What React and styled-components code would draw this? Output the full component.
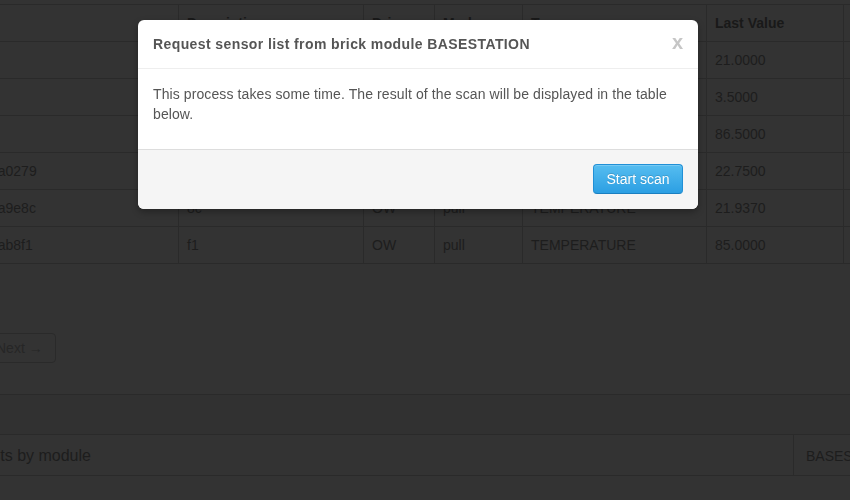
import styled, { createGlobalStyle } from 'styled-components';

// the page behind the modal is shown dimmed, so its colours are the darkened ones
const dim = {
  bg: '#333333',
  line: '#2a2a2a',
  text: '#1d1d1d',
  head: '#191919',
  muted: '#262626',
  band: '#313131',
};

const GlobalStyle = createGlobalStyle`
  html, body {
    margin: 0;
    padding: 0;
  }
  body {
    font-family: "Liberation Sans", Arial, Helvetica, sans-serif;
    font-size: 14px;
    line-height: 20px;
    color: ${dim.text};
    background: ${dim.bg};
    overflow: hidden;
  }
`;

const Page = styled.div`
  width: 850px;
  height: 500px;
  overflow: hidden;
  background: ${dim.bg};
`;

// page is scrolled sideways, so the left edge of the content sits off screen
const Content = styled.div`
  width: 1150px;
  margin-left: -86px;
  padding-top: 4px;
`;

const Table = styled.table`
  border-collapse: separate;
  border-spacing: 0;
  table-layout: fixed;
  width: 1079px;
  border-bottom: 1px solid ${dim.line};

  th,
  td {
    box-sizing: border-box;
    padding: 8px;
    line-height: 20px;
    text-align: left;
    vertical-align: top;
    border-top: 1px solid ${dim.line};
    border-left: 1px solid ${dim.line};
    white-space: nowrap;
    overflow: hidden;
  }
  th {
    font-weight: bold;
    color: ${dim.head};
  }
  td {
    color: ${dim.text};
  }
`;

const Pager = styled.ul`
  list-style: none;
  margin: 69px 0 0 67px;
  padding: 0;
`;

const PagerLink = styled.a`
  display: inline-block;
  padding: 4px 12px 4px 14px;
  border: 1px solid ${dim.line};
  border-radius: 4px;
  color: ${dim.muted};
  text-decoration: none;
`;

const Summary = styled.table`
  margin-top: 31px;
  border-collapse: separate;
  border-spacing: 0;
  table-layout: fixed;
  width: 1104px;
  border-bottom: 1px solid ${dim.line};
`;

const BandCell = styled.th`
  height: 39px;
  padding: 0;
  border-top: 1px solid ${dim.line};
  background: ${dim.band};
`;

const SummaryCell = styled.td`
  box-sizing: border-box;
  height: 41px;
  padding: 11px 12px 9px ${(p) => (p.$lead ? '15px' : '12px')};
  border-top: 1px solid ${dim.line};
  border-left: 1px solid ${dim.line};
  white-space: nowrap;
  overflow: hidden;
  font-size: ${(p) => (p.$lead ? '16px' : '14px')};
  line-height: 20px;
  color: ${dim.text};
`;

const Modal = styled.div`
  position: fixed;
  z-index: 20;
  top: 20px;
  left: 138px;
  width: 560px;
  background: #fff;
  border-radius: 6px;
  box-shadow: 0 3px 7px rgba(0, 0, 0, 0.3);
  overflow: hidden;
`;

const ModalHeader = styled.div`
  display: flex;
  align-items: center;
  justify-content: space-between;
  padding: 9px 15px;
  border-bottom: 1px solid #eee;
`;

const ModalTitle = styled.h3`
  margin: 0;
  font-size: 14px;
  line-height: 30px;
  font-weight: bold;
  letter-spacing: 0.4px;
  color: #555;
`;

const Close = styled.button`
  border: 0;
  padding: 0;
  margin: 0 0 4px;
  background: none;
  font-family: inherit;
  font-size: 20px;
  line-height: 20px;
  font-weight: bold;
  color: #c6c6c6;
  cursor: pointer;
`;

const ModalBody = styled.div`
  padding: 15px;

  p {
    margin: 0 0 10px;
    letter-spacing: 0.1px;
    color: #555;
  }
`;

const ModalFooter = styled.div`
  display: flex;
  justify-content: flex-end;
  padding: 14px 15px 15px;
  background: #f5f5f5;
  border-top: 1px solid #ddd;
`;

const Button = styled.button`
  box-sizing: border-box;
  height: 30px;
  width: 90px;
  padding: 4px 12px;
  font-family: inherit;
  font-size: 14px;
  line-height: 20px;
  color: #fff;
  text-shadow: 0 -1px 0 rgba(0, 0, 0, 0.15);
  background: linear-gradient(#56bdf0, #2c9fe3);
  border: 1px solid #2190d6;
  border-bottom-color: #1a7fc0;
  border-radius: 4px;
  box-shadow: inset 0 1px 0 rgba(255, 255, 255, 0.2);
  cursor: pointer;
`;

const columns = [264, 185, 71, 88, 184, 137, 150];
const headers = ['Address', 'Description', 'Driver', 'Mode', 'Type', 'Last Value', 'Unit'];

const rows = [
  ['i2c-48', 'Outside', 'I2C', 'pull', 'TEMPERATURE', '21.0000', '°C'],
  ['i2c-49', 'Wind', 'I2C', 'pull', 'SPEED', '3.5000', 'm/s'],
  ['adc-0', 'Humidity', 'ADC', 'pull', 'HUMIDITY', '86.5000', '%'],
  ['10-000802ba0279', '79', 'OW', 'pull', 'TEMPERATURE', '22.7500', '°C'],
  ['10-000802ba9e8c', '8c', 'OW', 'pull', 'TEMPERATURE', '21.9370', '°C'],
  ['10-000802bab8f1', 'f1', 'OW', 'pull', 'TEMPERATURE', '85.0000', '°C'],
];

export default function App() {
  return (
    <>
      <GlobalStyle />
      <Page>
        <Content>
          <Table>
            <colgroup>
              {columns.map((w, i) => (
                <col key={i} style={{ width: w }} />
              ))}
            </colgroup>
            <thead>
              <tr>
                {headers.map((h) => (
                  <th key={h}>{h}</th>
                ))}
              </tr>
            </thead>
            <tbody>
              {rows.map((r) => (
                <tr key={r[0]}>
                  {r.map((c, i) => (
                    <td key={i}>{c}</td>
                  ))}
                </tr>
              ))}
            </tbody>
          </Table>

          <Pager>
            <li>
              <PagerLink href="#">Next →</PagerLink>
            </li>
          </Pager>

          <Summary>
            <colgroup>
              <col style={{ width: 879 }} />
              <col style={{ width: 225 }} />
            </colgroup>
            <thead>
              <tr>
                <BandCell colSpan={2} />
              </tr>
            </thead>
            <tbody>
              <tr>
                <SummaryCell $lead>Sensor lists by module</SummaryCell>
                <SummaryCell>BASESTATION</SummaryCell>
              </tr>
            </tbody>
          </Summary>
        </Content>
      </Page>

      <Modal>
        <ModalHeader>
          <ModalTitle>Request sensor list from brick module BASESTATION</ModalTitle>
          <Close>x</Close>
        </ModalHeader>
        <ModalBody>
          <p>
            This process takes some time. The result of the scan will be displayed in the table
            below.
          </p>
        </ModalBody>
        <ModalFooter>
          <Button>Start scan</Button>
        </ModalFooter>
      </Modal>
    </>
  );
}
